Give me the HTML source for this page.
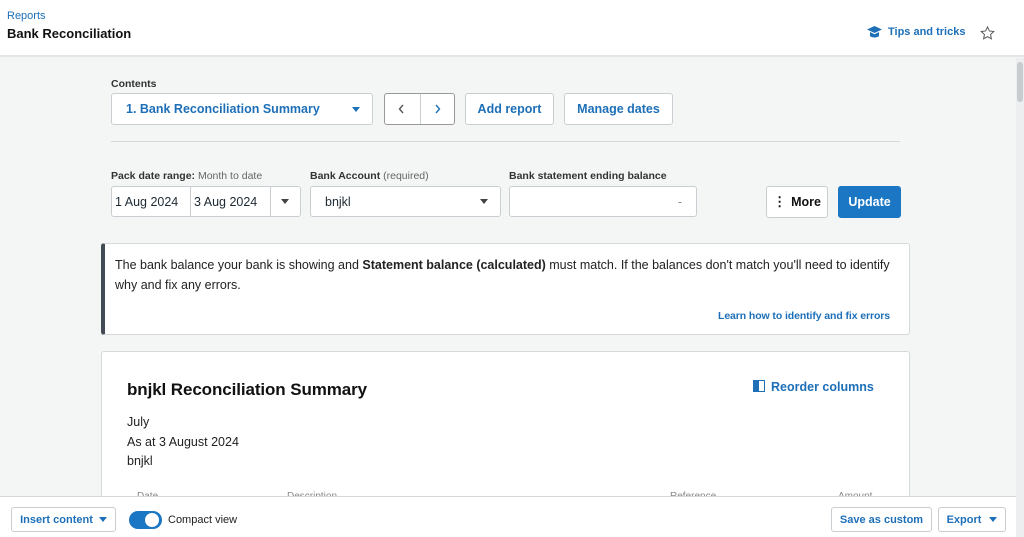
<!DOCTYPE html>
<html style="overflow:hidden;width:1024px;height:537px"><head><meta charset="utf-8"><style>
*{box-sizing:border-box;margin:0;padding:0}
body{width:1024px;height:537px;overflow:hidden;background:#f4f5f5;font-family:"Liberation Sans",Arial,sans-serif;color:#1e2a33;position:relative}
.abs{position:absolute}
.blue{color:#1d6fb8}
.btn{position:absolute;background:#fff;border:1px solid #c9ced2;border-radius:3px;font-weight:bold;font-size:12.5px;color:#1d6fb8;display:flex;align-items:center;justify-content:center}
.inp{position:absolute;background:#fff;border:1px solid #c9ced2;border-radius:3px;font-size:12.5px;display:flex;align-items:center}
.lbl{position:absolute;font-size:10.5px;font-weight:bold;color:#333}
.lbl span{font-weight:normal;color:#666}
.tri{width:0;height:0;border-left:4px solid transparent;border-right:4px solid transparent;border-top:5px solid #444;position:absolute}
</style></head><body>
<div class="abs" style="left:0;top:0;width:1024px;height:57px;background:#fff;border-bottom:2px solid #e3e5e7"></div>
<div class="abs blue" style="left:7px;top:10px;font-size:11px">Reports</div>
<div class="abs" style="left:7px;top:26px;font-size:13px;font-weight:bold;color:#111">Bank Reconciliation</div>
<svg class="abs" style="left:867px;top:26px" width="15" height="13" viewBox="0 0 15 13"><path d="M7.5 0L15 3.5 7.5 7 0 3.5z" fill="#1d6fb8"/><path d="M3 6v4c1.5 2 7.5 2 9 0V6L7.5 8.3z" fill="#1d6fb8"/></svg>
<div class="abs blue" style="left:888px;top:26px;font-size:11px;font-weight:bold">Tips and tricks</div>
<svg class="abs" style="left:980px;top:26px" width="15" height="14" viewBox="0 0 24 23"><path d="M12 1.5l3.1 6.6 7.2.9-5.3 5 1.4 7.1L12 17.6l-6.4 3.5L7 14l-5.3-5 7.2-.9z" fill="none" stroke="#555" stroke-width="1.6"/></svg>
<div class="abs" style="left:1016px;top:58px;width:8px;height:479px;background:#eceeef"></div>
<div class="abs" style="left:1017px;top:62px;width:6px;height:40px;background:#c8ccce;border-radius:3px"></div>

<div class="lbl" style="left:111px;top:78px">Contents</div>
<div class="btn" style="left:111px;top:93px;width:262px;height:32px;justify-content:flex-start;padding-left:14px">1. Bank Reconciliation Summary</div>
<div class="tri" style="left:352px;top:107px;border-top-color:#1d6fb8"></div>
<div class="btn" style="left:384px;top:93px;width:71px;height:32px;color:#555;font-weight:normal;border-color:#999"></div>
<div class="abs" style="left:420px;top:94px;width:1px;height:30px;background:#c9ced2"></div>
<svg class="abs" style="left:398px;top:104px" width="7" height="10"><path d="M5 1L1.5 5 5 9" fill="none" stroke="#555" stroke-width="1.4"/></svg>
<svg class="abs" style="left:434px;top:104px" width="7" height="10"><path d="M2 1l3.5 4L2 9" fill="none" stroke="#1d6fb8" stroke-width="1.4"/></svg>
<div class="btn" style="left:465px;top:93px;width:89px;height:32px">Add report</div>
<div class="btn" style="left:564px;top:93px;width:109px;height:32px">Manage dates</div>
<div class="abs" style="left:111px;top:141px;width:789px;height:1px;background:#d5d9dc"></div>

<div class="lbl" style="left:111px;top:170px">Pack date range: <span>Month to date</span></div>
<div class="lbl" style="left:310px;top:170px">Bank Account <span>(required)</span></div>
<div class="lbl" style="left:509px;top:170px">Bank statement ending balance</div>
<div class="inp" style="left:111px;top:186px;width:190px;height:31px"></div>
<div class="abs" style="left:115px;top:195px;font-size:12.5px">1 Aug 2024</div>
<div class="abs" style="left:190px;top:187px;width:1px;height:29px;background:#c9ced2"></div>
<div class="abs" style="left:194px;top:195px;font-size:12.5px">3 Aug 2024</div>
<div class="abs" style="left:270px;top:187px;width:1px;height:29px;background:#c9ced2"></div>
<div class="tri" style="left:281px;top:199px"></div>
<div class="inp" style="left:310px;top:186px;width:191px;height:31px;padding-left:14px">bnjkl</div>
<div class="tri" style="left:480px;top:199px"></div>
<div class="inp" style="left:509px;top:186px;width:188px;height:31px;justify-content:flex-end;padding-right:14px;color:#888">-</div>
<div class="btn" style="left:766px;top:186px;width:62px;height:32px;color:#111"><span style="font-size:13px;margin-right:6px;letter-spacing:-1px">⋮</span>More</div>
<div class="btn" style="left:838px;top:186px;width:63px;height:32px;background:#1b77c4;border-color:#1b77c4;color:#fff">Update</div>

<div class="abs" style="left:101px;top:243px;width:809px;height:92px;background:#fff;border:1px solid #d5d9dc;border-left:4px solid #434c54;border-radius:3px"></div>
<div class="abs" style="left:115px;top:256px;width:780px;font-size:12.5px;line-height:19.5px;color:#222">The bank balance your bank is showing and <b>Statement balance (calculated)</b> must match. If the balances don't match you'll need to identify why and fix any errors.</div>
<div class="abs blue" style="left:718px;top:310px;font-size:10.5px;font-weight:bold;letter-spacing:-0.1px">Learn how to identify and fix errors</div>

<div class="abs" style="left:101px;top:351px;width:809px;height:170px;background:#fff;border:1px solid #d5d9dc;border-radius:3px"></div>
<div class="abs" style="left:127px;top:380px;font-size:17px;font-weight:bold;color:#111;letter-spacing:-0.1px">bnjkl Reconciliation Summary</div>
<svg class="abs" style="left:753px;top:380px" width="12" height="12"><rect x="0.5" y="0.5" width="11" height="11" fill="none" stroke="#1d6fb8"/><rect x="0" y="0" width="6" height="12" fill="#1d6fb8"/></svg>
<div class="abs blue" style="left:771px;top:380px;font-size:12.5px;font-weight:bold">Reorder columns</div>
<div class="abs" style="left:127px;top:413px;font-size:12.5px;line-height:19.5px;color:#222">July<br>As at 3 August 2024<br>bnjkl</div>
<div class="abs" style="left:137px;top:491px;font-size:10px;color:#888;width:750px"><span class="abs" style="left:0">Date</span><span class="abs" style="left:150px">Description</span><span class="abs" style="left:533px">Reference</span><span class="abs" style="left:701px">Amount</span></div>

<div class="abs" style="left:0;top:496px;width:1016px;height:41px;background:#fff;border-top:1px solid #d5d9dc"></div>
<div class="btn" style="left:11px;top:507px;width:105px;height:25px;font-size:11px">Insert content<span class="tri" style="position:relative;display:inline-block;margin-left:6px;border-top-color:#1d6fb8"></span></div>
<div class="abs" style="left:129px;top:511px;width:33px;height:18px;border-radius:9px;background:#1b77c4"></div>
<div class="abs" style="left:145px;top:513px;width:14px;height:14px;border-radius:7px;background:#fff"></div>
<div class="abs" style="left:168px;top:514px;font-size:11px;color:#222">Compact view</div>
<div class="btn" style="left:831px;top:507px;width:101px;height:25px;font-size:11px">Save as custom</div>
<div class="btn" style="left:938px;top:507px;width:68px;height:25px;font-size:11px">Export<span class="tri" style="position:relative;display:inline-block;margin-left:8px;border-top-color:#1d6fb8"></span></div>
</body></html>
